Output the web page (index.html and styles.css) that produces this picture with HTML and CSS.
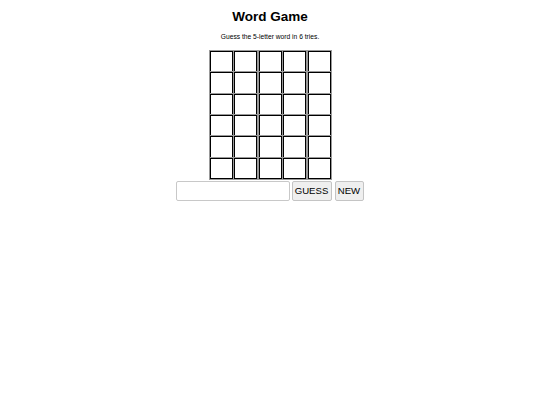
FILE: index.html
```html
<!DOCTYPE html>
<html>
<head>
<meta charset="utf-8">
<link rel="stylesheet" href="styles.css">
</head>
<body>
<div class="game">
  <h1 class="title">Word Game</h1>
  <p class="subtitle">Guess the 5-letter word in 6 tries.</p>
  <div class="board">
    <div class="row"><span class="cell"></span><span class="cell"></span><span class="cell"></span><span class="cell"></span><span class="cell"></span></div>
    <div class="row"><span class="cell"></span><span class="cell"></span><span class="cell"></span><span class="cell"></span><span class="cell"></span></div>
    <div class="row"><span class="cell"></span><span class="cell"></span><span class="cell"></span><span class="cell"></span><span class="cell"></span></div>
    <div class="row"><span class="cell"></span><span class="cell"></span><span class="cell"></span><span class="cell"></span><span class="cell"></span></div>
    <div class="row"><span class="cell"></span><span class="cell"></span><span class="cell"></span><span class="cell"></span><span class="cell"></span></div>
    <div class="row"><span class="cell"></span><span class="cell"></span><span class="cell"></span><span class="cell"></span><span class="cell"></span></div>
  </div>
  <div class="controls">
    <input class="guess-input" type="text">
    <button class="btn btn-guess">GUESS</button>
    <button class="btn btn-new">NEW</button>
  </div>
</div>
</body>
</html>
```

FILE: styles.css
```css
html, body {
  margin: 0;
  padding: 0;
  background: #ffffff;
}
body {
  font-family: "Liberation Sans", Arial, sans-serif;
  color: #000;
}
.game {
  display: flex;
  flex-direction: column;
  align-items: center;
  padding-top: 9px;
}
.title {
  margin: 0;
  font-size: 13.5px;
  font-weight: bold;
  line-height: 16px;
}
.subtitle {
  margin: 8px 0 10px;
  font-size: 6.7px;
  line-height: 8px;
}
.board {
  display: flex;
  flex-direction: column;
}
.row {
  display: flex;
  gap: 1.5px;
}
.cell {
  box-sizing: border-box;
  width: 23px;
  height: 21.33px;
  border: 1px solid #000;
  outline: 0.5px solid #999;
  outline-offset: -0.5px;
}
.controls {
  display: flex;
  margin-top: 2px;
  margin-left: -1px;
}
.guess-input {
  box-sizing: border-box;
  width: 114px;
  height: 20px;
  border: 1px solid #c8c8c8;
  border-radius: 2px;
  margin: 0 2px 0 0;
  padding: 0 2px;
  font-size: 9.33px;
  font-family: "Liberation Sans", Arial, sans-serif;
}
.btn {
  box-sizing: border-box;
  height: 20px;
  margin: 0;
  padding: 0;
  font-family: "Liberation Sans", Arial, sans-serif;
  font-size: 9.6px;
  color: #000;
  background: #efefef;
  border: 1px solid #c4c4c4;
  border-radius: 2px;
}
.btn-guess {
  width: 40px;
  margin-right: 3px;
}
.btn-new {
  width: 29px;
}
```
